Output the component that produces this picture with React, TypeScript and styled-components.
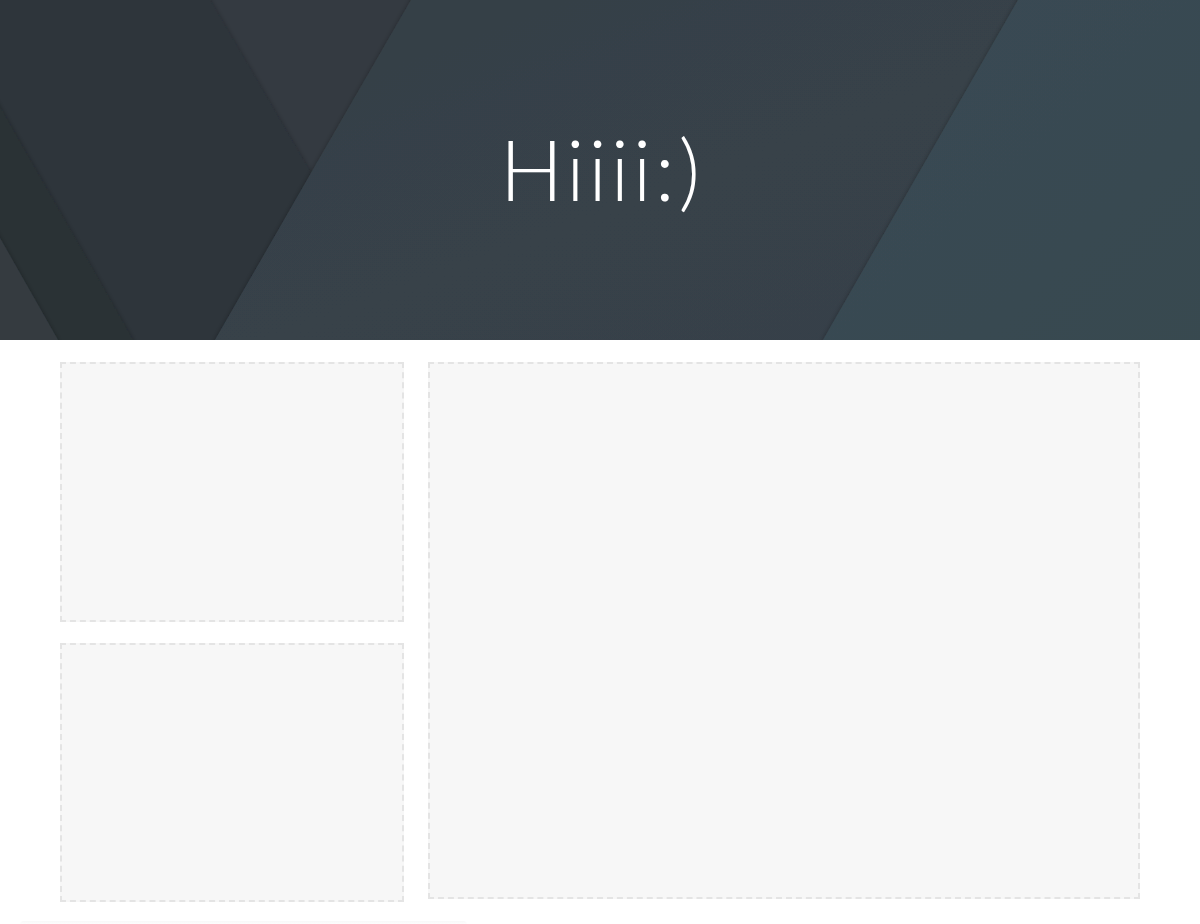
import React from "react";
import styled, { createGlobalStyle } from "styled-components";

const GlobalStyle = createGlobalStyle`
  html, body {
    margin: 0;
    padding: 0;
    background: #ffffff;
  }
  body {
    font-family: "Lato", "Liberation Sans", sans-serif;
  }
  * { box-sizing: border-box; }
`;

const Page = styled.div`
  width: 1200px;
  min-height: 924px;
  background: #ffffff;
  overflow: hidden;
`;

const Hero = styled.header`
  position: relative;
  height: 340px;
  display: flex;
  align-items: center;
  justify-content: center;
  background: #343a41;
  overflow: hidden;
`;

const HeroArt = styled.svg`
  position: absolute;
  inset: 0;
  width: 100%;
  height: 100%;
  display: block;
`;

const Title = styled.h1`
  position: relative;
  margin: 0 0 0 3.5px;
  color: #ffffff;
  font-family: "Lato", "Liberation Sans", sans-serif;
  font-weight: 300;
  font-size: 84px;
  line-height: 1;
  letter-spacing: 3.5px;
  padding-bottom: 2px;
`;

const Content = styled.main`
  width: 1080px;
  margin: 22px auto 0;
  display: grid;
  grid-template-columns: 344px 712px;
  column-gap: 24px;
  align-items: start;
`;

const Column = styled.div`
  display: flex;
  flex-direction: column;
  gap: 21px;
`;

const Panel = styled.section<{ $h: number }>`
  height: ${(p) => p.$h}px;
  background: #f7f7f7;
  border: 2px dashed #e4e4e4;
`;

const FooterEdge = styled.div`
  width: 447px;
  height: 4px;
  margin: 19px 0 0 20px;
  background: linear-gradient(to bottom, #f8f8f8, #ffffff);
  border-radius: 4px 4px 0 0;
`;

function Background() {
  return (
    <HeroArt viewBox="0 0 1200 340" preserveAspectRatio="none" aria-hidden="true">
      <defs>
        <filter id="sh" x="-10%" y="-10%" width="120%" height="120%">
          <feDropShadow dx="0" dy="0" stdDeviation="2.5" floodColor="#000" floodOpacity="0.3" />
        </filter>
        <linearGradient id="mid" x1="0" y1="0" x2="1" y2="1">
          <stop offset="0" stopColor="#353f45" />
          <stop offset="0.5" stopColor="#37424a" />
          <stop offset="1" stopColor="#364047" />
        </linearGradient>
        <linearGradient id="teal" x1="0" y1="0" x2="1" y2="1">
          <stop offset="0" stopColor="#3a4a53" />
          <stop offset="1" stopColor="#384850" />
        </linearGradient>
      </defs>
      <rect x="0" y="0" width="1200" height="340" fill="#343a41" />
      <polygon points="-20,-20 210,-20 210,0 311,173 215,340 215,360 -20,360" fill="#2d343b" filter="url(#sh)" />
      <polygon points="-20,72 0,107 133,340 133,360 -20,360" fill="#2a3134" filter="url(#sh)" />
      <polygon points="-20,203 0,238 58,340 58,360 -20,360" fill="#343b41" filter="url(#sh)" />
      <polygon points="411,-20 1220,-20 1220,360 215,360 215,340 311,173 411,0" fill="url(#mid)" filter="url(#sh)" />
      <polygon points="1018,-20 1220,-20 1220,360 823,360 823,340 1018,0" fill="url(#teal)" filter="url(#sh)" />
    </HeroArt>
  );
}

export default function App() {
  return (
    <Page>
      <GlobalStyle />
      <Hero>
        <Background />
        <Title>Hiiii:)</Title>
      </Hero>
      <Content>
        <Column>
          <Panel $h={260} />
          <Panel $h={259} />
        </Column>
        <Panel $h={537} />
      </Content>
      <FooterEdge />
    </Page>
  );
}
